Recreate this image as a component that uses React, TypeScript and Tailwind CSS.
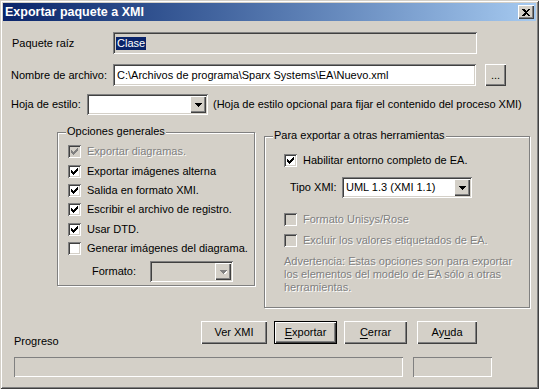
import React from 'react';

const raised =
  'shadow-[inset_1px_1px_0_#ffffff,inset_-1px_-1px_0_#404040,inset_-2px_-2px_0_#808080]';
const sunken =
  'shadow-[inset_1px_1px_0_#808080,inset_-1px_-1px_0_#ffffff,inset_2px_2px_0_#404040,inset_-2px_-2px_0_#d4d0c8]';
const thinSunken = 'shadow-[inset_1px_1px_0_#808080,inset_-1px_-1px_0_#ffffff]';
const etched = '[text-shadow:1px_1px_0_#ffffff] text-[#808080]';

function Check({ checked, disabled }: { checked?: boolean; disabled?: boolean }) {
  const color = disabled ? '#808080' : '#000000';
  return (
    <div className={`w-[13px] h-[13px] shrink-0 ${sunken} ${disabled ? 'bg-[#d4d0c8]' : 'bg-white'}`}>
      {checked && (
        <svg width="13" height="13" viewBox="0 0 13 13" shapeRendering="crispEdges">
          <path d="M3 5h1v3h-1z M4 6h1v3h-1z M5 7h1v3h-1z M6 6h1v3h-1z M7 5h1v3h-1z M8 4h1v3h-1z M9 3h1v3h-1z" fill={color} />
        </svg>
      )}
    </div>
  );
}

function CheckRow({ label, checked, disabled, h = 19 }: { label: string; checked?: boolean; disabled?: boolean; h?: number }) {
  return (
    <div className="flex items-center gap-[6px]" style={{ height: h }}>
      <Check checked={checked} disabled={disabled} />
      <span className={disabled ? etched : ''}>{label}</span>
    </div>
  );
}

function Select({ w, h = 21, value, disabled }: { w: number; h?: number; value?: string; disabled?: boolean }) {
  return (
    <div
      className={`relative flex items-center ${sunken} ${disabled ? 'bg-[#d4d0c8]' : 'bg-white'}`}
      style={{ width: w, height: h }}
    >
      <span className="pl-[4px]">{value}</span>
      <div className={`absolute right-[2px] top-[2px] bottom-[2px] w-[16px] bg-[#d4d0c8] flex items-center justify-center ${raised}`}>
        <svg width="7" height="4" viewBox="0 0 7 4" shapeRendering="crispEdges">
          {disabled && <path d="M1 1h7l-3.5 4z" fill="#ffffff" />}
          <path d="M0 0h7l-3.5 4z" fill={disabled ? '#808080' : '#000000'} />
        </svg>
      </div>
    </div>
  );
}

function Button({ label, w, u, isDefault }: { label: string; w: number; u?: number; isDefault?: boolean }) {
  const chars = label.split('');
  return (
    <div
      className={`h-[23px] flex items-center justify-center bg-[#d4d0c8] ${isDefault ? 'border border-black shadow-[inset_1px_1px_0_#ffffff,inset_-1px_-1px_0_#404040,inset_-2px_-2px_0_#808080]' : raised}`}
      style={{ width: w }}
    >
      <span>
        {chars.map((c, i) => (
          <span key={i} className={i === u ? 'underline underline-offset-2' : ''}>
            {c}
          </span>
        ))}
      </span>
    </div>
  );
}

function Group({ label, w, h, children, className = '' }: { label: string; w: number; h: number; children: React.ReactNode; className?: string }) {
  return (
    <div
      className={`relative border border-[#808080] shadow-[1px_1px_0_#ffffff,inset_1px_1px_0_#ffffff] ${className}`}
      style={{ width: w, height: h }}
    >
      <span className="absolute -top-[8px] left-[8px] px-[1px] bg-[#d4d0c8] leading-[13px]">{label}</span>
      {children}
    </div>
  );
}

export default function App() {
  return (
    <div
      className="w-[539px] h-[389px] bg-[#d4d0c8] p-[3px] flex flex-col text-[11px] leading-[13px] text-black shadow-[inset_1px_1px_0_#d4d0c8,inset_-1px_-1px_0_#404040,inset_2px_2px_0_#ffffff,inset_-2px_-2px_0_#808080]"
      style={{ fontFamily: '"Liberation Sans", Arial, sans-serif' }}
    >
      <div className="h-[18px] shrink-0 flex items-center justify-between bg-gradient-to-r from-[#0a246a] to-[#a6caf0] pl-[2px] pr-[2px]">
        <span className="text-white font-bold text-[12.5px]">Exportar paquete a XMI</span>
        <div className={`w-[16px] h-[14px] bg-[#d4d0c8] flex items-center justify-center ${raised}`}>
          <svg width="8" height="7" viewBox="0 0 8 7" shapeRendering="crispEdges">
            <path d="M0 0h2l2 2 2-2h2l-3 3.5 3 3.5h-2l-2-2-2 2h-2l3-3.5z" fill="#000" />
          </svg>
        </div>
      </div>

      <div className="flex items-center mt-[11px]">
        <span className="pl-[9px] w-[110px]">Paquete raíz</span>
        <div className={`w-[364px] h-[22px] flex items-center pl-[3px] ${sunken}`}>
          <span className="bg-[#0a246a] text-white px-[1px]">Clase</span>
        </div>
      </div>

      <div className="flex items-center mt-[10px]">
        <span className="pl-[8px] w-[110px]">Nombre de archivo:</span>
        <div className={`w-[363px] h-[22px] flex items-center pl-[4px] bg-white ${sunken}`}>
          C:\Archivos de programa\Sparx Systems\EA\Nuevo.xml
        </div>
        <div className={`ml-[9px] w-[21px] h-[22px] flex items-center justify-center ${raised}`}>...</div>
      </div>

      <div className="flex items-center mt-[8px]">
        <span className="pl-[8px] w-[84px]">Hoja de estilo:</span>
        <Select w={121} />
        <span className="ml-[5px]">(Hoja de estilo opcional para fijar el contenido del proceso XMI)</span>
      </div>

      <div className="flex items-start mt-[17px]">
        <Group label="Opciones generales" w={198} h={154} className="ml-[54px]">
          <div className="pl-[10px] pt-[9px] flex flex-col">
            <CheckRow label="Exportar diagramas." checked disabled h={19} />
            <CheckRow label="Exportar imágenes alterna" checked h={20} />
            <CheckRow label="Salida en formato XMI." checked h={19} />
            <CheckRow label="Escribir el archivo de registro." checked h={19} />
            <CheckRow label="Usar DTD." checked h={20} />
            <CheckRow label="Generar imágenes del diagrama." h={19} />
            <div className="flex items-center mt-[3px]">
              <span className="pl-[24px] w-[82px]">Formato:</span>
              <Select w={83} disabled />
            </div>
          </div>
        </Group>

        <Group label="Para exportar a otras herramientas" w={266} h={172} className="ml-[9px] mt-[4px]">
          <div className="pl-[19px] pt-[14px] flex flex-col">
            <CheckRow label="Habilitar entorno completo de EA." checked h={19} />
            <div className="flex items-center mt-[7px]">
              <span className="pl-[6px] w-[58px]">Tipo XMI:</span>
              <Select w={130} value="UML 1.3 (XMI 1.1)" />
            </div>
            <div className="mt-[12px]">
              <CheckRow label="Formato Unisys/Rose" disabled h={19} />
            </div>
            <div className="mt-[2px]">
              <CheckRow label="Excluir los valores etiquetados de EA." disabled h={19} />
            </div>
            <p className={`mt-[5px] ${etched}`}>
              Advertencia: Estas opciones son para exportar
              <br />
              los elementos del modelo de EA sólo a otras
              <br />
              herramientas.
            </p>
          </div>
        </Group>
      </div>

      <div className="flex items-start mt-[13px]">
        <div className="w-[198px] pl-[11px] pt-[14px]">Progreso</div>
        <Button label="Ver XMI" w={66} />
        <div className="ml-[7px]">
          <Button label="Exportar" w={63} u={0} isDefault />
        </div>
        <div className="ml-[7px]">
          <Button label="Cerrar" w={63} u={0} />
        </div>
        <div className="ml-[10px]">
          <Button label="Ayuda" w={60} u={2} />
        </div>
      </div>

      <div className="flex items-center mt-[9px]">
        <div className={`ml-[11px] w-[389px] h-[20px] ${thinSunken}`} />
        <div className={`ml-[10px] w-[79px] h-[20px] ${thinSunken}`} />
      </div>
    </div>
  );
}
